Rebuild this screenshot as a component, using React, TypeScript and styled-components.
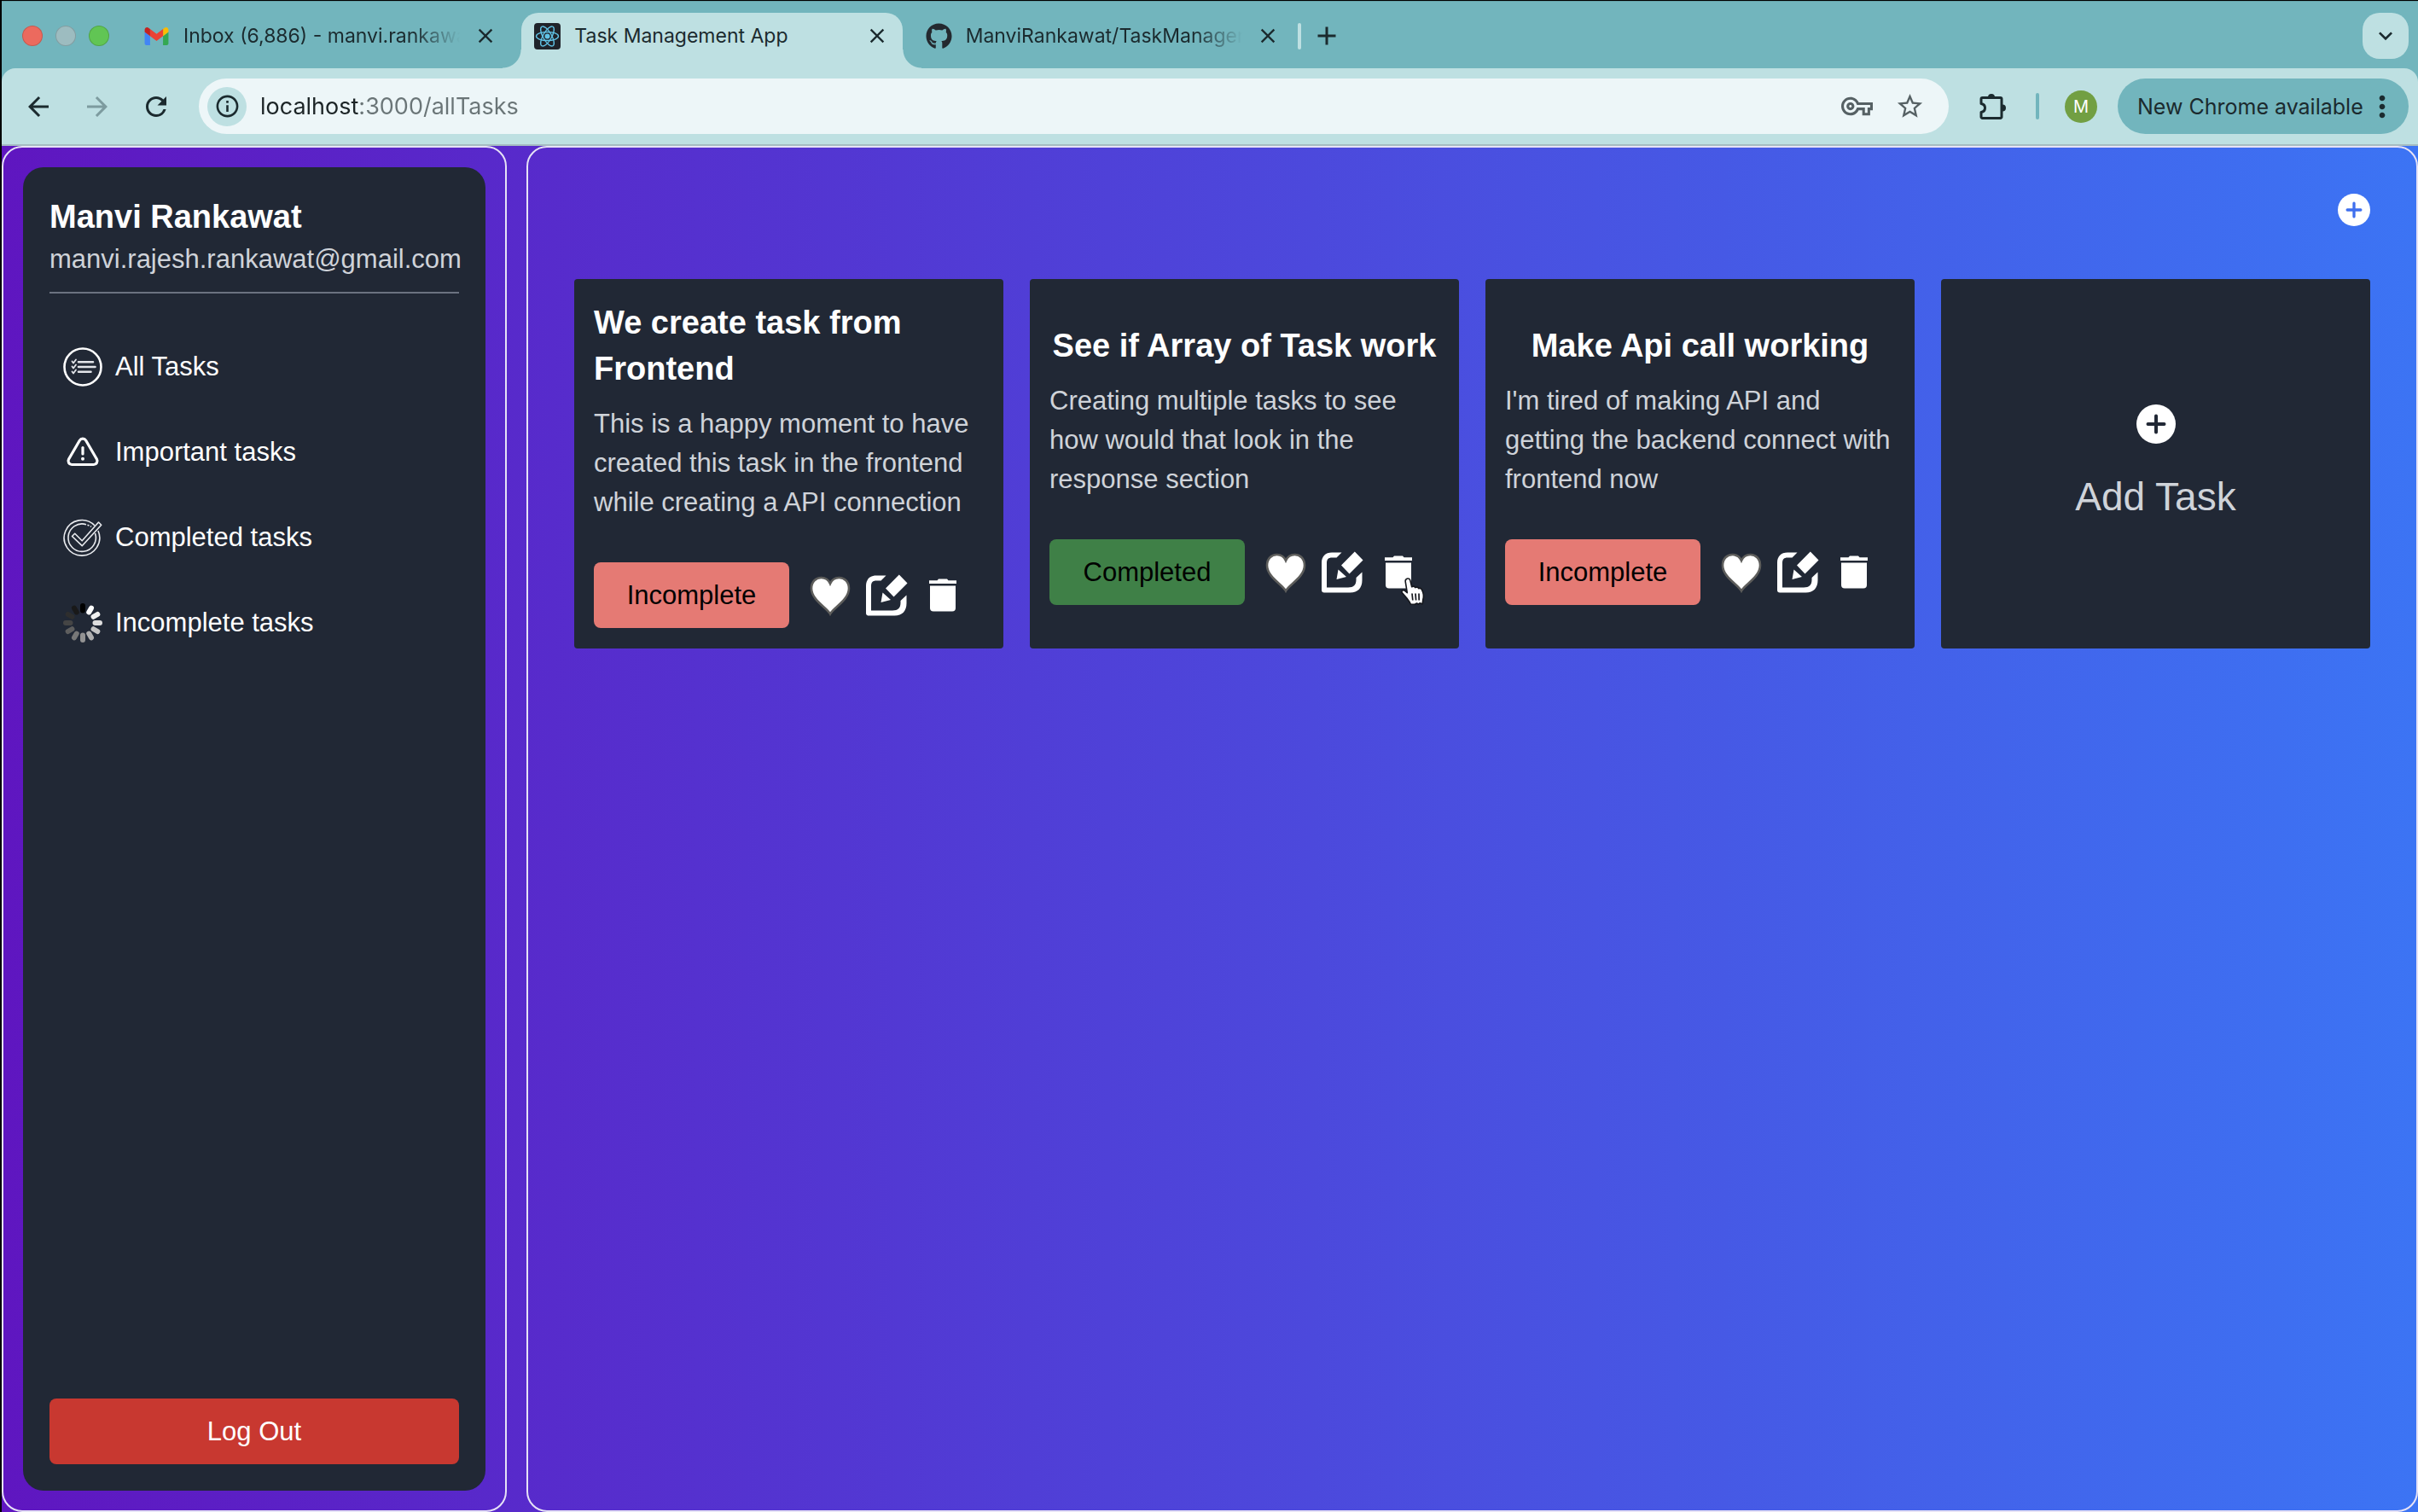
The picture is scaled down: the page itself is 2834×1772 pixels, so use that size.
import React from "react";
import styled, { createGlobalStyle } from "styled-components";
import {
  MdAdd,
  MdArrowBack,
  MdArrowForward,
  MdClose,
  MdExpandMore,
  MdInfoOutline,
  MdMoreVert,
  MdOutlineVpnKey,
  MdRefresh,
  MdStarBorder,
} from "react-icons/md";
import { FaGithub } from "react-icons/fa";

const color = {
  strip: "#72b5bd",
  toolbar: "#bee0e2",
  field: "#edf6f8",
  ink: "#1b2a2e",
  panel: "#212835",
  muted: "#cfd3d9",
  outline: "#e6e2f6",
};

const chromeFont = `Inter, Roboto, sans-serif`;
const pageFont = `"Liberation Sans", Arial, Helvetica, sans-serif`;

const GlobalStyle = createGlobalStyle`
  *, *::before, *::after { box-sizing: border-box; }
  body { margin: 0; background: #000; font-family: ${pageFont}; }
  button, input { font-family: inherit; margin: 0; }
  button { border: 0; padding: 0; background: none; color: inherit; cursor: pointer; }
  h1, h2, p, ul { margin: 0; padding: 0; }
  svg { display: block; flex: none; }
`;

const Window = styled.div`
  min-height: 100vh;
  display: flex;
  flex-direction: column;
  border-top: 1px solid #000;
  border-left: 2px solid #000;
`;

/* Browser chrome */

const TabStrip = styled.header`
  display: flex;
  height: 79px;
  padding: 13px 11px 0 24px;
  border-top: 1px solid #65a1a8;
  background: ${color.strip};
  color: ${color.ink};
  font-family: ${chromeFont};
`;

const Lights = styled.div`
  display: flex;
  align-items: center;
  gap: 15px;
  height: 54px;
  margin-right: 25px;
`;

const Light = styled.button<{ $fill: string }>`
  width: 24px;
  height: 24px;
  border-radius: 50%;
  border: 1px solid rgba(0, 0, 0, 0.16);
  background: ${(p) => p.$fill};
`;

const Tabs = styled.div`
  display: flex;
  flex: 0 1 1363px;
  min-width: 0;
  gap: 12px;
`;

const TabShell = styled.div<{ $active?: boolean }>`
  position: relative;
  flex: 1 1 0;
  min-width: 0;
  display: flex;
  align-items: center;
  gap: 14px;
  height: 65px;
  padding: 0 14px 11px 15px;
  border-radius: 20px 20px 0 0;
  background: ${(p) => (p.$active ? color.toolbar : "transparent")};

  &::before,
  &::after {
    content: "";
    display: ${(p) => (p.$active ? "block" : "none")};
    position: absolute;
    bottom: 0;
    width: 22px;
    height: 22px;
  }
  &::before {
    right: 100%;
    background: radial-gradient(circle at 0 0, transparent 21px, ${color.toolbar} 22px);
  }
  &::after {
    left: 100%;
    background: radial-gradient(circle at 100% 0, transparent 21px, ${color.toolbar} 22px);
  }
`;

const TabButton = styled.button`
  flex: 1;
  min-width: 0;
  display: flex;
  align-items: center;
  gap: 16px;
  text-align: left;
`;

const TabLabel = styled.span<{ $fade?: boolean }>`
  flex: 1;
  min-width: 0;
  overflow: hidden;
  white-space: nowrap;
  font-size: 23px;
  line-height: 32px;
  ${(p) => p.$fade && "mask-image: linear-gradient(to left, transparent, #000 56px);"}
`;

const IconButton = styled.button<{ $size?: number }>`
  display: grid;
  place-items: center;
  flex: none;
  width: ${(p) => p.$size ?? 32}px;
  height: ${(p) => p.$size ?? 32}px;
`;

const NewTab = styled.div`
  display: flex;
  align-items: center;
  gap: 10px;
  height: 54px;
  margin-left: 5px;
`;

const Divider = styled.span<{ $tone: string }>`
  width: 4px;
  height: 31px;
  border-radius: 2px;
  background: ${(p) => p.$tone};
`;

const TabSearch = styled(IconButton)`
  margin-left: auto;
  border-radius: 20px;
  background: ${color.toolbar};
`;

const ToolbarFrame = styled.div`
  background: ${color.strip};
`;

const Toolbar = styled.div`
  display: flex;
  align-items: center;
  height: 91px;
  padding: 0 11px 0 25px;
  border-bottom: 2px solid #a5bcc1;
  border-radius: 16px 16px 0 0;
  background: ${color.toolbar};
  color: ${color.ink};
  font-family: ${chromeFont};
`;

const History = styled.nav`
  display: flex;
  gap: 33px;
  margin-right: 32px;
`;

const AddressBar = styled.form`
  flex: 1;
  min-width: 0;
  display: flex;
  align-items: center;
  height: 65px;
  padding: 0 26px 0 10px;
  border-radius: 33px;
  background: ${color.field};
`;

const SiteInfo = styled(IconButton)`
  margin-right: 16px;
  border-radius: 50%;
  background: ${color.toolbar};
`;

const Address = styled.input`
  flex: 1;
  min-width: 0;
  padding: 0;
  border: 0;
  outline: 0;
  font-size: 27px;
  line-height: 40px;
  color: transparent;
  caret-color: ${color.ink};
  background: linear-gradient(to right, #1c2426 115px, #6a7577 115px);
  background-clip: text;
  -webkit-background-clip: text;
`;

const FieldActions = styled.div`
  display: flex;
  gap: 22px;
  color: #566164;
`;

const ToolbarActions = styled.div`
  display: flex;
  align-items: center;
  gap: 30px;
  margin: 0 24px 0 32px;
`;

const Avatar = styled.button`
  width: 38px;
  height: 38px;
  border-radius: 50%;
  background: #729f43;
  color: #fff;
  font-size: 20px;
  line-height: 38px;
`;

const UpdateButton = styled.button`
  display: flex;
  align-items: center;
  justify-content: space-between;
  height: 65px;
  width: 341px;
  padding: 0 11px 0 23px;
  border-radius: 33px;
  background: ${color.strip};
  font-size: 25px;
  line-height: 32px;
  white-space: nowrap;
`;

/* Task manager page */

const Page = styled.div`
  flex: 1;
  display: grid;
  grid-template-columns: 592px minmax(0, 1fr);
  gap: 23px;
  background: linear-gradient(to right, #5f16c0, #3c74f4);
`;

const Frame = styled.div`
  border: 2px solid ${color.outline};
  border-radius: 24px;
`;

const SidebarFrame = styled(Frame)`
  display: flex;
  padding: 23px;
`;

const Sidebar = styled.aside`
  flex: 1;
  min-width: 0;
  display: flex;
  flex-direction: column;
  justify-content: space-between;
  padding: 31px;
  border-radius: 24px;
  background: ${color.panel};
`;

const Profile = styled.div`
  padding-bottom: 15px;
  border-bottom: 2px solid #6b7280;
`;

const UserName = styled.h1`
  font-size: 38px;
  line-height: 54px;
  color: #fff;
`;

const Email = styled.p`
  font-size: 31px;
  line-height: 46px;
  color: ${color.muted};
  white-space: nowrap;
`;

const Menu = styled.ul`
  display: flex;
  flex-direction: column;
  gap: 23px;
  margin-top: 47px;
  list-style: none;
`;

const MenuLink = styled.a`
  display: flex;
  align-items: center;
  gap: 15px;
  height: 77px;
  padding: 0 16px;
  font-size: 31px;
  line-height: 46px;
  color: #fff;
  text-decoration: none;
`;

const LogOut = styled.button`
  height: 77px;
  border-radius: 8px;
  background: #c83830;
  color: #fff;
  font-size: 31px;
  line-height: 46px;
`;

const Board = styled(Frame).attrs({ as: "main" })`
  padding: 54px;
`;

const BoardHeader = styled.div`
  display: flex;
  justify-content: flex-end;
  margin-bottom: 62px;
`;

const Cards = styled.div`
  display: grid;
  grid-template-columns: repeat(4, minmax(0, 1fr));
  gap: 31px;
`;

const Card = styled.article`
  display: flex;
  flex-direction: column;
  align-items: center;
  justify-content: center;
  min-height: 433px;
  padding: 24px 23px;
  border-radius: 4px;
  background: ${color.panel};
`;

const CardTitle = styled.h2`
  margin-bottom: 15px;
  font-size: 38px;
  line-height: 54px;
  color: #fff;
`;

const CardText = styled.p`
  align-self: stretch;
  margin-bottom: 47px;
  font-size: 31px;
  line-height: 46px;
  color: ${color.muted};
`;

const CardActions = styled.div`
  align-self: stretch;
  display: flex;
  align-items: center;
  gap: 23px;
`;

const Status = styled.button<{ $done: boolean }>`
  width: 229px;
  height: 77px;
  border-radius: 8px;
  background: ${(p) => (p.$done ? "#3f8047" : "#e57a74")};
  color: #000;
  font-size: 31px;
  line-height: 46px;
`;

const IconRow = styled.div`
  display: flex;
  gap: 16px;
`;

const DeleteButton = styled(IconButton)`
  position: relative;
`;

const Pointer = styled.span`
  position: absolute;
  left: 27px;
  top: 30px;
`;

const AddCard = styled(Card).attrs({ as: "button" })`
  gap: 31px;
  color: ${color.muted};
  font-size: 46px;
  line-height: 62px;
`;

/* Drawings */

const GmailIcon = () => (
  <svg width="31" height="31" viewBox="47 26 98 98">
    <path fill="#4285f4" d="M58 108h14V74L52 59v43c0 3.32 2.69 6 6 6" />
    <path fill="#34a853" d="M120 108h14c3.32 0 6-2.69 6-6V59l-20 15" />
    <path fill="#fbbc04" d="M120 48v26l20-15v-8c0-7.42-8.47-11.65-14.4-7.2" />
    <path fill="#ea4335" d="M72 74V48l24 18 24-18v26L96 92" />
    <path fill="#c5221f" d="M52 51v8l20 15V48l-5.6-4.2c-5.94-4.45-14.4-.22-14.4 7.2" />
  </svg>
);

const ReactIcon = () => (
  <svg width="31" height="31" viewBox="0 0 31 31">
    <rect width="31" height="31" rx="4" fill="#20232a" />
    <g fill="none" stroke="#61c3e6" strokeWidth="1.4">
      {[0, 60, 120].map((turn) => (
        <ellipse key={turn} cx="15.5" cy="15.5" rx="13" ry="5" transform={`rotate(${turn} 15.5 15.5)`} />
      ))}
    </g>
    <circle cx="15.5" cy="15.5" r="3" fill="#61c3e6" />
  </svg>
);

const PuzzleIcon = () => (
  <svg width="32" height="32" viewBox="0 0 32 32">
    <path
      d="M3.500 5.500h21a1.500 1.500 0 0 1 1.500 1.500v21a1.500 1.500 0 0 1-1.500 1.500h-21A1.500 1.500 0 0 1 2 28v-5.500c3-.5 4.500-2.500 4.500-5S5 13 2 12.500V7a1.500 1.500 0 0 1 1.500-1.500z"
      fill="none"
      stroke="currentColor"
      strokeWidth="3"
      strokeLinejoin="round"
    />
    <path d="M10 5a4 4 0 0 1 8 0zM27 13.500a4 4 0 0 1 0 8z" fill="currentColor" />
  </svg>
);

const ListIcon = () => (
  <svg width="46" height="46" viewBox="0 0 46 46" fill="none" stroke="#fff" strokeLinecap="round" strokeLinejoin="round">
    <circle cx="23" cy="23" r="21.500" strokeWidth="2.600" />
    <g stroke="#e3e5ea">
      <path d="M18 17.200h17M18 23h19.500M18 28.800h14.500" strokeWidth="2.600" />
      <path d="M10.500 16.500l1.500 2 3-4M10.500 22.500l1.500 2 3-4M10.500 28.500l1.500 2 3-4" strokeWidth="1.800" />
    </g>
  </svg>
);

const WarningIcon = () => (
  <svg width="46" height="46" viewBox="0 0 46 46" fill="none" stroke="#fff" strokeLinecap="round" strokeLinejoin="round">
    <path d="M19.300 9.300 6.500 31.300a4.200 4.200 0 0 0 3.600 6.200h25.800a4.200 4.200 0 0 0 3.600-6.200L26.700 9.300a4.300 4.300 0 0 0-7.400 0z" strokeWidth="3.200" />
    <path d="M23 17.500v7.500" strokeWidth="3.200" />
    <circle cx="23" cy="30.700" r="1" strokeWidth="2" />
  </svg>
);

const CheckedIcon = () => (
  <svg width="46" height="46" viewBox="0 0 46 46" fill="none" stroke="#e8eaee" strokeWidth="1.600" strokeLinejoin="round">
    <path d="M37 9a20.800 20.800 0 1 0 4 6" />
    <path d="M27 7.700A16.200 16.200 0 1 0 37.500 18" />
    <path d="M28.500 8.200l2 .8M32 9.700l1 .6" />
    <path d="M10.500 21.500l3.200-3.200 8.500 8.500L41.500 5l3.200 3.200-22.500 24.500z" />
  </svg>
);

const spokes = ["#000", "#fff", "#f0f0f0", "#dedede", "#c4c4c4", "#adadad", "#939393", "#777", "#5e5e5e", "#454545", "#2e2e2e", "#191919"];

const SpinnerIcon = () => (
  <svg width="46" height="46" viewBox="0 0 46 46">
    {spokes.map((fill, i) => (
      <rect key={fill} x="20" y="0" width="6" height="11.500" rx="3" fill={fill} transform={`rotate(${i * 30} 23 23)`} />
    ))}
  </svg>
);

const HeartIcon = () => (
  <svg width="50" height="50" viewBox="0 0 50 50">
    <path
      d="M25 46.500C21 39 3 30 3 16.500 3 8.500 8.500 4 14.500 4c4.500 0 8.500 2.500 10.500 7 2-4.500 6-7 10.500-7C41.500 4 47 8.500 47 16.500 47 30 29 39 25 46.500z"
      fill="#fff"
      stroke="#5d5d5b"
      strokeWidth="2.600"
    />
  </svg>
);

const EditIcon = () => (
  <svg width="50" height="50" viewBox="0 0 50 50" fill="#fff">
    <path d="M24.500 1.500 18.500 7.500H13C9 7.500 7 9.500 7 13.500V42.500H32c6.500 0 9.500-3 9.500-9V31L48.500 24.500V34c0 9-5 14.500-14 14.500H4c-2 0-3-1-3-3V13.500C1 6 5.500 1.500 13 1.500z" />
    <path d="M39.800 .5 49.500 10.500 33.500 26.500 24 16.500zM20.500 21.500l9.500 8.500-11.500 3z" />
  </svg>
);

const TrashIcon = () => (
  <svg width="50" height="50" viewBox="0 0 50 50" fill="#fff">
    <path d="M20 5.500h10l1.500 1.700h9.500V11H9V7.200h9.500z" />
    <path d="M10 13.500h30V39.500a4 4 0 0 1-4 4H14a4 4 0 0 1-4-4z" />
  </svg>
);

const HandIcon = () => (
  <svg width="30" height="34" viewBox="0 0 30 34">
    <path
      d="M8 2.200c2.200-.7 3.500.6 3.900 2.400l1.800 7.200c1.600-.9 3.300-.4 4 .8 1.600-.8 3.300-.3 4 1.100 1.500-.6 3-.1 3.700 1.300 2.300 4 2.600 7.400 1.400 11.600l-.6 5.200-3.200-1-1.500 1.200-2-1-2.200 1.200-5-.2c-.8-3-3-4.600-4.700-7.200L2.200 18.600c-1-2.400 1.300-3.700 3.400-2.200l2.700 2.300L6.200 5.600C6 4 6.600 2.700 8 2.200z"
      fill="#fff"
      stroke="#15171c"
      strokeWidth="1.600"
      strokeLinejoin="round"
    />
    <path d="M14 19.500l.8 8M18 19.500l.6 8M22 19.500l.2 8" stroke="#15171c" strokeWidth="1.700" />
  </svg>
);

const AddIcon = ({ size, plus }: { size: number; plus: string }) => (
  <svg width={size} height={size} viewBox="0 0 46 46">
    <circle cx="23" cy="23" r="23" fill="#fff" />
    <path d="M23 13.500v19M13.500 23h19" stroke={plus} strokeWidth="4" strokeLinecap="round" />
  </svg>
);

/* Data */

const tabs = [
  { title: "Inbox (6,886) - manvi.rankawat@gmail.com", icon: <GmailIcon />, fade: true },
  { title: "Task Management App", icon: <ReactIcon />, active: true },
  { title: "ManviRankawat/TaskManagement", icon: <FaGithub size={31} color="#24292f" />, fade: true },
];

const menu = [
  { title: "All Tasks", href: "/allTasks", icon: <ListIcon /> },
  { title: "Important tasks", href: "/importantTasks", icon: <WarningIcon /> },
  { title: "Completed tasks", href: "/completedTasks", icon: <CheckedIcon /> },
  { title: "Incomplete tasks", href: "/incompleteTasks", icon: <SpinnerIcon /> },
];

const tasks = [
  {
    title: "We create task from Frontend",
    text: "This is a happy moment to have created this task in the frontend while creating a API connection",
    done: false,
  },
  {
    title: "See if Array of Task work",
    text: "Creating multiple tasks to see how would that look in the response section",
    done: true,
    hovered: true,
  },
  {
    title: "Make Api call working",
    text: "I'm tired of making API and getting the backend connect with frontend now",
    done: false,
  },
];

export default function App() {
  return (
    <Window>
      <GlobalStyle />
      <TabStrip>
        <Lights>
          <Light $fill="#ec6a5e" aria-label="Close window" />
          <Light $fill="#9dbcc0" aria-label="Minimize window" />
          <Light $fill="#61c554" aria-label="Zoom window" />
        </Lights>
        <Tabs>
          {tabs.map((tab) => (
            <TabShell key={tab.title} $active={tab.active}>
              <TabButton>
                {tab.icon}
                <TabLabel $fade={tab.fade}>{tab.title}</TabLabel>
              </TabButton>
              <IconButton aria-label="Close tab">
                <MdClose size={28} />
              </IconButton>
            </TabShell>
          ))}
        </Tabs>
        <NewTab>
          <Divider $tone={color.toolbar} />
          <IconButton $size={40} aria-label="New tab">
            <MdAdd size={36} />
          </IconButton>
        </NewTab>
        <TabSearch $size={54} aria-label="Search tabs">
          <MdExpandMore size={32} />
        </TabSearch>
      </TabStrip>

      <ToolbarFrame>
        <Toolbar>
          <History>
            <IconButton $size={36} aria-label="Back">
              <MdArrowBack size={36} />
            </IconButton>
            <IconButton $size={36} aria-label="Forward">
              <MdArrowForward size={36} color="#7d9b9f" />
            </IconButton>
            <IconButton $size={36} aria-label="Reload">
              <MdRefresh size={36} />
            </IconButton>
          </History>
          <AddressBar>
            <SiteInfo type="button" $size={46} aria-label="Site information">
              <MdInfoOutline size={31} />
            </SiteInfo>
            <Address aria-label="Address" defaultValue="localhost:3000/allTasks" />
            <FieldActions>
              <IconButton type="button" $size={40} aria-label="Passwords">
                <MdOutlineVpnKey size={37} />
              </IconButton>
              <IconButton type="button" $size={40} aria-label="Bookmark">
                <MdStarBorder size={35} />
              </IconButton>
            </FieldActions>
          </AddressBar>
          <ToolbarActions>
            <IconButton $size={40} aria-label="Extensions">
              <PuzzleIcon />
            </IconButton>
            <Divider $tone={color.strip} />
            <Avatar aria-label="Profile">M</Avatar>
          </ToolbarActions>
          <UpdateButton>
            New Chrome available
            <MdMoreVert size={40} />
          </UpdateButton>
        </Toolbar>
      </ToolbarFrame>

      <Page>
        <SidebarFrame>
          <Sidebar>
            <div>
              <Profile>
                <UserName>Manvi Rankawat</UserName>
                <Email>manvi.rajesh.rankawat@gmail.com</Email>
              </Profile>
              <Menu>
                {menu.map((item) => (
                  <li key={item.href}>
                    <MenuLink href={item.href}>
                      {item.icon}
                      {item.title}
                    </MenuLink>
                  </li>
                ))}
              </Menu>
            </div>
            <LogOut>Log Out</LogOut>
          </Sidebar>
        </SidebarFrame>

        <Board>
          <BoardHeader>
            <IconButton $size={38} aria-label="Add task">
              <AddIcon size={38} plus="#3f6fee" />
            </IconButton>
          </BoardHeader>
          <Cards>
            {tasks.map((task) => (
              <Card key={task.title}>
                <CardTitle>{task.title}</CardTitle>
                <CardText>{task.text}</CardText>
                <CardActions>
                  <Status $done={task.done}>{task.done ? "Completed" : "Incomplete"}</Status>
                  <IconRow>
                    <IconButton $size={50} aria-label="Mark as important">
                      <HeartIcon />
                    </IconButton>
                    <IconButton $size={50} aria-label="Edit task">
                      <EditIcon />
                    </IconButton>
                    <DeleteButton $size={50} aria-label="Delete task">
                      <TrashIcon />
                      {task.hovered && (
                        <Pointer>
                          <HandIcon />
                        </Pointer>
                      )}
                    </DeleteButton>
                  </IconRow>
                </CardActions>
              </Card>
            ))}
            <AddCard>
              <AddIcon size={46} plus={color.panel} />
              Add Task
            </AddCard>
          </Cards>
        </Board>
      </Page>
    </Window>
  );
}
